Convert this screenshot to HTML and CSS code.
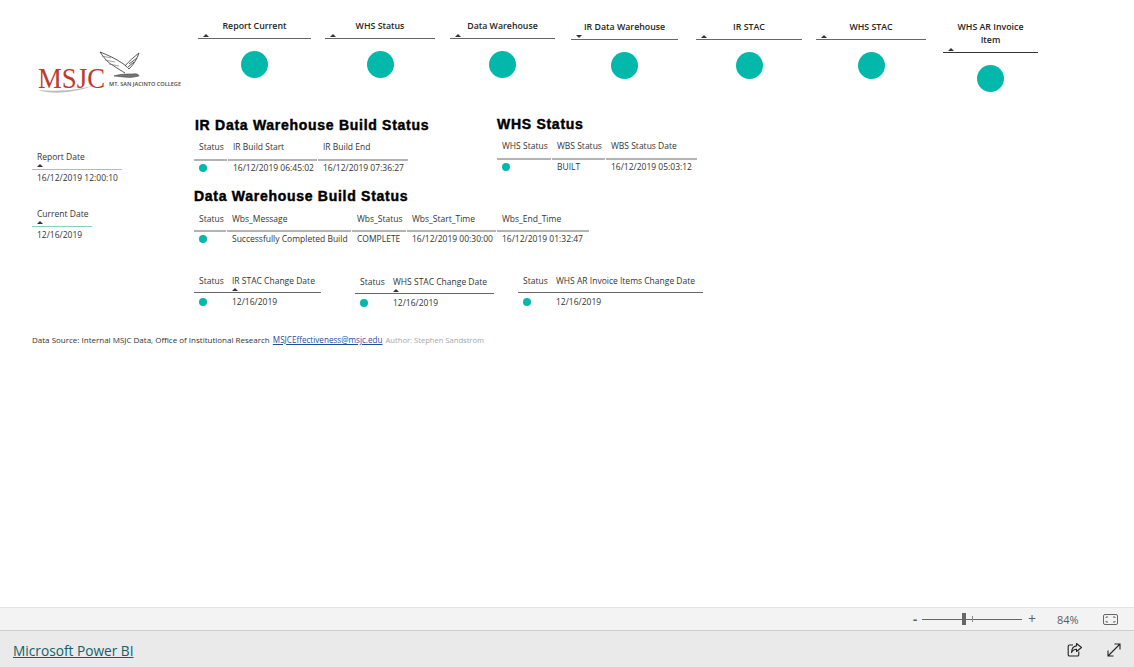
FILE: index.html
```html
<!DOCTYPE html>
<html lang="en">
<head>
  <meta charset="UTF-8" />
  <title>Microsoft Power BI</title>
  <link rel="stylesheet" href="styles.css">
</head>
<body>
  <div class="page">
    <main class="canvas">

      <div class="top-row">
        <div class="logo-col">
          <svg class="logo" width="150" height="46" viewBox="0 0 150 46">
            <path d="M0 40 C14 45 40 43 62 33 C46 40 20 42 0 40 Z" fill="#bdbdbd"/>
            <text x="0" y="38" class="logo-mark" textLength="67" lengthAdjust="spacingAndGlyphs">MSJC</text>
            <text x="71" y="36" class="logo-name" textLength="72" lengthAdjust="spacingAndGlyphs">MT. SAN JACINTO COLLEGE</text>
            <path d="M62 2 C66 8 70 13 76 16 C80 19 84 21 87 23 M62 2 C70 5 78 9 84 13 C87 15 89 17 91 19" fill="none" stroke="#444" stroke-width="0.9"/>
            <path d="M64 6 L73 8 M67 10 L77 12 M71 14 L81 16" fill="none" stroke="#777" stroke-width="0.7"/>
            <path d="M101 3 C99 9 96 14 91 19 M101 3 C96 7 91 11 87 16 M99 8 L91 14 M96 12 L90 17" fill="none" stroke="#444" stroke-width="0.9"/>
            <path d="M76 26 C82 24 88 24 95 24 C99 23 101 25 101 26 L96 27 C92 28 86 27 76 26 Z" fill="#777" stroke="#333" stroke-width="0.5"/>
          </svg>
        </div>

        <section class="tile tile-report">
          <h3>Report Current</h3>
          <span class="caret"></span>
          <div class="tile-dot"></div>
        </section>
        <section class="tile tile-whs">
          <h3>WHS Status</h3>
          <span class="caret"></span>
          <div class="tile-dot"></div>
        </section>
        <section class="tile tile-dw">
          <h3>Data Warehouse</h3>
          <span class="caret"></span>
          <div class="tile-dot"></div>
        </section>
        <section class="tile tile-ir low">
          <h3>IR Data Warehouse</h3>
          <span class="caret down"></span>
          <div class="tile-dot"></div>
        </section>
        <section class="tile tile-stac low">
          <h3>IR STAC</h3>
          <span class="caret"></span>
          <div class="tile-dot"></div>
        </section>
        <section class="tile tile-wstac low">
          <h3>WHS STAC</h3>
          <span class="caret"></span>
          <div class="tile-dot"></div>
        </section>
        <section class="tile tile-ar low">
          <h3>WHS AR Invoice Item</h3>
          <span class="caret"></span>
          <div class="tile-dot"></div>
        </section>
      </div>

      <div class="body-row">
        <div class="dates">
          <div class="date-card report-date">
            <div class="date-label">Report Date</div>
            <span class="caret"></span>
            <div class="date-value">16/12/2019 12:00:10</div>
          </div>
          <div class="date-card current-date">
            <div class="date-label">Current Date</div>
            <span class="caret"></span>
            <div class="date-value">12/16/2019</div>
          </div>
        </div>

        <div class="tables">
          <div class="status-row">
            <section class="ir-build">
              <h2>IR Data Warehouse Build Status</h2>
              <div class="grid grid-ir">
                <div class="th">Status</div>
                <div class="th">IR Build Start</div>
                <div class="th">IR Build End</div>
                <div class="td"><i class="dot"></i></div>
                <div class="td">16/12/2019 06:45:02</div>
                <div class="td">16/12/2019 07:36:27</div>
              </div>
            </section>
            <section class="whs-build">
              <h2>WHS Status</h2>
              <div class="grid grid-whs">
                <div class="th">WHS Status</div>
                <div class="th">WBS Status</div>
                <div class="th">WBS Status Date</div>
                <div class="td"><i class="dot"></i></div>
                <div class="td">BUILT</div>
                <div class="td">16/12/2019 05:03:12</div>
              </div>
            </section>
          </div>

          <section class="dw-build">
            <h2>Data Warehouse Build Status</h2>
            <div class="grid grid-dw">
              <div class="th">Status</div>
              <div class="th">Wbs_Message</div>
              <div class="th">Wbs_Status</div>
              <div class="th">Wbs_Start_Time</div>
              <div class="th">Wbs_End_Time</div>
              <div class="td"><i class="dot"></i></div>
              <div class="td">Successfully Completed Build</div>
              <div class="td">COMPLETE</div>
              <div class="td">16/12/2019 00:30:00</div>
              <div class="td">16/12/2019 01:32:47</div>
            </div>
          </section>

          <div class="change-row">
            <div class="grid grid-stac">
              <div class="th sorted">Status</div>
              <div class="th sorted">IR STAC Change Date<span class="caret"></span></div>
              <div class="td"><i class="dot"></i></div>
              <div class="td">12/16/2019</div>
            </div>
            <div class="grid grid-wstac">
              <div class="th sorted">Status</div>
              <div class="th sorted">WHS STAC Change Date<span class="caret"></span></div>
              <div class="td"><i class="dot"></i></div>
              <div class="td">12/16/2019</div>
            </div>
            <div class="grid grid-ar">
              <div class="th sorted">Status</div>
              <div class="th sorted no-caret">WHS AR Invoice Items Change Date</div>
              <div class="td"><i class="dot"></i></div>
              <div class="td">12/16/2019</div>
            </div>
          </div>
        </div>
      </div>

      <p class="source">
        Data Source: Internal MSJC Data, Office of Institutional Research
        <a href="#">MSJCEffectiveness@msjc.edu</a>
        <span class="author">Author: Stephen Sandstrom</span>
      </p>
    </main>

    <div class="zoom-bar">
      <span class="zoom-minus">-</span>
      <div class="zoom-track"><i class="zoom-tick"></i><i class="zoom-thumb"></i></div>
      <span class="zoom-plus">+</span>
      <span class="zoom-value">84%</span>
      <svg class="fit-icon" width="15" height="11" viewBox="0 0 15 11">
        <rect x="0.5" y="0.5" width="14" height="10" rx="1.5" fill="none" stroke="#666"/>
        <path d="M3 4V3H5M10 3H12V4M12 7V8H10M5 8H3V7" fill="none" stroke="#666"/>
      </svg>
    </div>

    <footer class="footer">
      <a class="brand" href="#">Microsoft Power BI</a>
      <div class="footer-icons">
        <svg width="16" height="16" viewBox="0 0 16 16">
          <path d="M6 3H2.5C1.7 3 1.2 3.5 1.2 4.3V12.7C1.2 13.5 1.7 14 2.5 14H10.5C11.3 14 11.8 13.5 11.8 12.7V9.5" fill="none" stroke="#222" stroke-width="1.1"/>
          <path d="M9.5 1.5L14.5 5.5L9.5 9.5V7.2C7 7.2 5.5 8.5 4.5 10.5C4.7 7 6.5 4.2 9.5 3.9Z" fill="none" stroke="#222" stroke-width="1.1" stroke-linejoin="round"/>
        </svg>
        <svg width="14" height="14" viewBox="0 0 14 14">
          <path d="M1 13L13 1M7.5 1H13V6.5M1 7.5V13H6.5" fill="none" stroke="#222" stroke-width="1.1"/>
        </svg>
      </div>
    </footer>
  </div>
</body>
</html>
```

FILE: styles.css
```css
html, body {
  margin: 0;
  height: 100%;
  background: white;
  font-family: "Open Sans", "Noto Sans", sans-serif;
  color: #333;
}

.page {
  height: 667px;
  display: flex;
  flex-direction: column;
  overflow: hidden;
}

.canvas {
  flex: 1;
  min-height: 0;
}

/* top tiles */
.top-row {
  display: flex;
  align-items: flex-start;
  height: 116px;
  padding-top: 19px;
  box-sizing: border-box;
}

.logo-col {
  width: 198px;
  flex: none;
  padding: 31px 0 0 38px;
  box-sizing: border-box;
}

.logo {
  display: block;
  overflow: visible;
}

.logo-mark {
  font-family: "Liberation Serif", serif;
  font-size: 29px;
  fill: #c0392b;
}

.logo-name {
  font-family: "Open Sans", sans-serif;
  font-size: 5px;
  font-weight: 600;
  fill: #444;
}

.tile {
  flex: none;
  position: relative;
}

.tile h3 {
  margin: 0;
  padding: 1px 8px 0;
  min-height: 13px;
  font-size: 8.8px;
  line-height: 13px;
  font-weight: 600;
  text-align: center;
  color: #252423;
}

.tile .caret {
  display: block;
  margin-left: 5px;
  height: 5px;
}

.tile .caret::before { top: 1px; }

.tile-dot {
  width: 27px;
  height: 27px;
  margin: 13px auto 0;
  border-radius: 50%;
  background: #01b8aa;
}

.tile::after {
  content: "";
  position: absolute;
  left: 0;
  right: 0;
  height: 1px;
  background: #666;
  top: 19px;
}

.tile.low { margin-top: 1px; }

.tile-report { width: 113px; }
.tile-whs { width: 110px; margin-left: 14px; }
.tile-dw { width: 105px; margin-left: 15px; }
.tile-ir { width: 107px; margin-left: 16px; }
.tile-stac { width: 106px; margin-left: 18px; }
.tile-wstac { width: 110px; margin-left: 14px; }
.tile-ar { width: 95px; margin-left: 17px; }
.tile-ar::after { top: 32px; background: #333; }

/* sort arrows */
.caret {
  position: relative;
}

.caret::before {
  content: "";
  position: absolute;
  top: 3px;
  left: 0;
  border-left: 3px solid transparent;
  border-right: 3px solid transparent;
  border-bottom: 3px solid #333;
}

.caret.down::before {
  border-bottom: 0;
  border-top: 3px solid #333;
}

/* body */
.body-row {
  display: flex;
  align-items: flex-start;
}

.dates {
  width: 194px;
  flex: none;
  padding: 35px 0 0 32px;
  box-sizing: border-box;
}

.date-label, .date-value {
  font-size: 8.5px;
  line-height: 12px;
  padding-left: 5px;
}

.date-card .caret {
  display: block;
  height: 6px;
  margin-left: 5px;
}

.date-card .caret::before { top: 1px; }

.date-value {
  border-top: 1px solid #7fd4c6;
  padding-top: 2px;
}

.report-date { width: 90px; }

.current-date {
  width: 60px;
  margin-top: 24px;
}

.tables {
  flex: 1;
}

.status-row {
  display: flex;
  align-items: flex-start;
}

h2 {
  margin: 0;
  font-family: "Liberation Sans", Arial, sans-serif;
  font-size: 14px;
  line-height: 18px;
  font-weight: bold;
  letter-spacing: 0.72px;
  color: black;
  -webkit-text-stroke: 0.45px black;
}

.ir-build {
  width: 303px;
  flex: none;
}

.ir-build h2 { padding-left: 1px; }

.whs-build { margin-top: -1px; }

.dw-build { margin-top: 13px; }

.grid {
  display: grid;
  column-gap: 1px;
  font-size: 8.5px;
  line-height: 12px;
}

.th {
  padding: 7px 0 6px 5px;
  border-bottom: 2px solid #b3b3b3;
}

.td {
  padding: 1px 0 0 5px;
  white-space: nowrap;
}

.dot {
  display: block;
  width: 8px;
  height: 8px;
  margin: 2px 0 0 0;
  border-radius: 50%;
  background: #01b8aa;
}

.grid-ir { width: 214px; grid-template-columns: 33px 89px 90px; }
.grid-whs { width: 200px; grid-template-columns: 54px 53px 91px; }
.grid-dw { width: 394px; grid-template-columns: 32px 124px 54px 89px 92px; }
.grid-dw .th { padding: 8px 0 5px 5px; }

.change-row {
  display: flex;
  align-items: flex-start;
  margin-top: 30px;
}

.change-row .td { padding-top: 3px; }

.th.sorted {
  padding: 0 0 0 5px;
  border-bottom: 1px solid #666;
  white-space: nowrap;
}

.th.sorted .caret {
  display: block;
  height: 5px;
}

.th.sorted .caret::before { top: 1px; }

.th.no-caret { padding-bottom: 5px; }

.grid-stac { width: 127px; grid-template-columns: 33px 94px; column-gap: 0; }
.grid-wstac { width: 139px; margin: 1px 0 0 34px; grid-template-columns: 33px 106px; column-gap: 0; }
.grid-ar { width: 185px; margin-left: 24px; grid-template-columns: 33px 152px; column-gap: 0; }

.source {
  margin: 25px 0 0 32px;
  font-size: 8px;
  line-height: 12px;
}

.source a {
  margin-left: 1px;
  font-size: 8.15px;
  color: #1f4e9c;
}

.author {
  margin-left: 1px;
  color: #a6a6a6;
  font-size: 7.6px;
}

/* zoom bar */
.zoom-bar {
  height: 24px;
  flex: none;
  display: flex;
  align-items: center;
  box-sizing: border-box;
  background: #f3f3f3;
  border-top: 1px solid #e3e3e3;
  border-bottom: 1px solid #cfcfcf;
  padding-left: 913px;
  color: #605e5c;
}

.zoom-minus {
  width: 9px;
  font-size: 13px;
  font-weight: bold;
  line-height: 1;
}

.zoom-track {
  width: 100px;
  height: 1px;
  background: #666;
  position: relative;
}

.zoom-thumb {
  position: absolute;
  left: 40px;
  top: -6px;
  width: 4px;
  height: 12px;
  background: #666;
}

.zoom-tick {
  position: absolute;
  left: 50px;
  top: -3px;
  width: 1px;
  height: 6px;
  background: #888;
}

.zoom-plus {
  margin-left: 6px;
  font-size: 14px;
  line-height: 1;
}

.zoom-value {
  margin-left: 21px;
  font-size: 11px;
}

.fit-icon {
  margin-left: 24px;
}

/* footer */
.footer {
  height: 36px;
  flex: none;
  display: flex;
  align-items: center;
  justify-content: space-between;
  box-sizing: border-box;
  background: #eaeaea;
  padding: 2px 13px 0;
}

.brand {
  font-size: 13.7px;
  font-weight: 500;
  color: #0f6268;
}

.footer-icons {
  display: flex;
  align-items: center;
  gap: 24px;
}
```
